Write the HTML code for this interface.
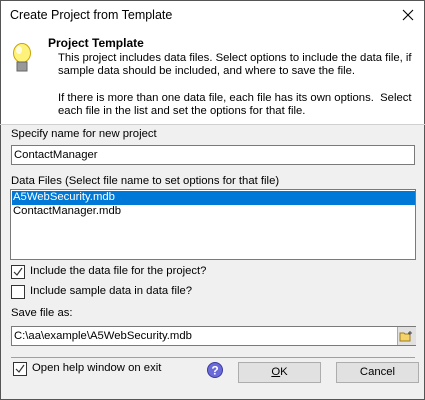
<!DOCTYPE html>
<html><head><style>
body{margin:0;width:425px;height:400px;overflow:hidden;font-family:"Liberation Sans",sans-serif;font-size:11.3px;color:#000;background:#f0f0f0;position:relative}
.a{position:absolute;white-space:nowrap}
.cb{position:absolute;width:12px;height:12px;border:1px solid #333;background:#fff}
.inp{position:absolute;background:#fff;border:1px solid #7a7a7a;box-sizing:border-box}
.btn{position:absolute;background:#e1e1e1;border:1px solid #adadad;box-sizing:border-box;text-align:center;line-height:19px}
</style></head><body>
<div class="a" style="left:0;top:0;width:425px;height:124px;background:#fff"></div>
<div class="a" style="left:0;top:0;width:1px;height:400px;background:#555"></div>
<div class="a" style="left:424px;top:0;width:1px;height:400px;background:#555"></div>
<div class="a" style="left:0;top:399px;width:425px;height:1px;background:#555"></div>
<div class="a" style="left:0;top:0;width:425px;height:1px;background:#555"></div>
<div class="a" style="left:10px;top:8px;font-size:12.5px">Create Project from Template</div>
<svg class="a" style="left:402px;top:9px" width="12" height="12"><path d="M1 1L11 11M11 1L1 11" stroke="#000" stroke-width="1.1"/></svg>
<svg class="a" style="left:11px;top:42px" width="22" height="32"><ellipse cx="11" cy="11" rx="8.5" ry="9.5" fill="#fff27a" stroke="#c9a400"/><ellipse cx="8" cy="8" rx="3" ry="4" fill="#fffde0"/><rect x="6" y="20" width="10" height="9" fill="#999" stroke="#666"/></svg>
<div class="a" style="left:48px;top:36px;font-weight:bold;font-size:12px">Project Template</div>
<div class="a" style="left:58px;top:52px;line-height:13.3px;font-size:11.3px">This project includes data files. Select options to include the data file, if<br>sample data should be included, and where to save the file.<br><br>If there is more than one data file, each file has its own options.&nbsp; Select<br>each file in the list and set the options for that file.</div>
<div class="a" style="left:0;top:124px;width:425px;height:1px;background:#d0d0d0"></div>
<div class="a" style="left:11px;top:128px">Specify name for new project</div>
<div class="inp" style="left:11px;top:145px;width:404px;height:20px"><span class="a" style="left:2px;top:3px">ContactManager</span></div>
<div class="a" style="left:11px;top:175px">Data Files (Select file name to set options for that file)</div>
<div class="inp" style="left:10px;top:189px;width:406px;height:71px">
<div class="a" style="left:1px;top:1px;width:403px;height:14px;background:#0078d7"></div>
<span class="a" style="left:2px;top:1px;color:#fff">A5WebSecurity.mdb</span>
<span class="a" style="left:2px;top:15px">ContactManager.mdb</span></div>
<div class="cb" style="left:11px;top:265px"></div>
<svg class="a" style="left:13px;top:267px" width="10" height="10"><path d="M1 5L4 8L9 1" stroke="#333" fill="none" stroke-width="1.2"/></svg>
<div class="a" style="left:30px;top:265px">Include the data file for the project?</div>
<div class="cb" style="left:11px;top:285px"></div>
<div class="a" style="left:30px;top:285px">Include sample data in data file?</div>
<div class="a" style="left:11px;top:307px">Save file as:</div>
<div class="inp" style="left:11px;top:326px;width:405px;height:20px"><span class="a" style="left:2px;top:3px">C:\aa\example\A5WebSecurity.mdb</span></div>
<div class="a" style="left:397px;top:327px;width:18px;height:18px;background:#e1e1e1;border-left:1px solid #aaa"></div>
<svg class="a" style="left:399px;top:330px" width="14" height="12"><path d="M1 3h4l1 1h5v7H1z" fill="#f3d36a" stroke="#a07c20"/><path d="M11 1v4M9 3h4" stroke="#444"/></svg>
<div class="a" style="left:11px;top:357px;width:404px;height:1px;background:#a0a0a0"></div>
<div class="cb" style="left:13px;top:362px"></div>
<svg class="a" style="left:15px;top:364px" width="10" height="10"><path d="M1 5L4 8L9 1" stroke="#333" fill="none" stroke-width="1.2"/></svg>
<div class="a" style="left:32px;top:362px">Open help window on exit</div>
<svg class="a" style="left:207px;top:362px" width="16" height="16"><circle cx="8" cy="8" r="7.5" fill="#6a6ad8" stroke="#3a3aa0"/><text x="8" y="12.5" font-size="12" font-weight="bold" fill="#fff" text-anchor="middle" font-family="Liberation Sans">?</text></svg>
<div class="btn" style="left:238px;top:362px;width:83px;height:21px"><u>O</u>K</div>
<div class="btn" style="left:336px;top:362px;width:83px;height:21px">Cancel</div>
</body></html>
